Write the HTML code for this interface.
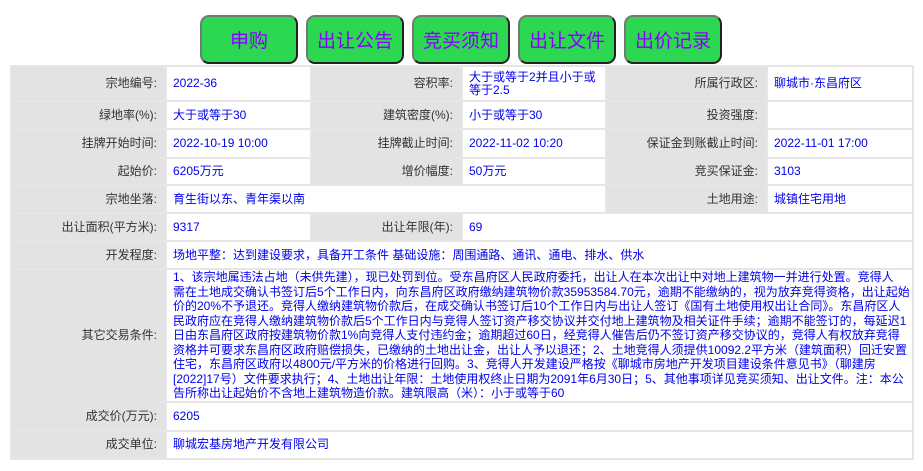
<!DOCTYPE html>
<html><head><meta charset="utf-8"><style>
body{margin:0;background:#fff;font-family:"Liberation Sans","Noto Sans CJK SC",sans-serif;font-size:12px;}
.btns{position:absolute;top:15px;left:0;}
.b{position:absolute;top:0;height:45px;width:94px;background:#2cd852;border:2px solid #555;border-top-color:#777;border-left-color:#777;border-bottom-color:#222;border-right-color:#222;border-radius:9px;color:#8a00ff;font-size:19px;text-align:center;line-height:45px;font-family:"Noto Sans CJK SC",sans-serif;}
table{position:absolute;top:65px;left:10px;border-collapse:collapse;table-layout:fixed;width:902px;}
td{border:2px solid #e6e6e6;padding:0 6px;vertical-align:middle;line-height:13px;}
td.l{background:#e3e3e3;text-align:right;color:#333;padding-right:8px;}
td.v{background:#fff;color:#0000ee;}
.long{white-space:nowrap;line-height:14.5px;font-size:12px;}
</style></head><body>
<div class="btns">
<div class="b" style="left:200px">申购</div>
<div class="b" style="left:306px">出让公告</div>
<div class="b" style="left:412px">竞买须知</div>
<div class="b" style="left:518px">出让文件</div>
<div class="b" style="left:624px">出价记录</div>
</div>
<table>
<colgroup><col style="width:155px"><col style="width:145px"><col style="width:151px"><col style="width:144px"><col style="width:161px"><col style="width:146px"></colgroup>
<tr style="height:35px"><td class="l">宗地编号:</td><td class="v">2022-36</td><td class="l">容积率:</td><td class="v">大于或等于2并且小于或等于2.5</td><td class="l">所属行政区:</td><td class="v">聊城市·东昌府区</td></tr>
<tr style="height:28px"><td class="l">绿地率(%):</td><td class="v">大于或等于30</td><td class="l">建筑密度(%):</td><td class="v">小于或等于30</td><td class="l">投资强度:</td><td class="v"></td></tr>
<tr style="height:29px"><td class="l">挂牌开始时间:</td><td class="v">2022-10-19 10:00</td><td class="l">挂牌截止时间:</td><td class="v">2022-11-02 10:20</td><td class="l">保证金到账截止时间:</td><td class="v">2022-11-01 17:00</td></tr>
<tr style="height:27px"><td class="l">起始价:</td><td class="v">6205万元</td><td class="l">增价幅度:</td><td class="v">50万元</td><td class="l">竞买保证金:</td><td class="v">3103</td></tr>
<tr style="height:28px"><td class="l">宗地坐落:</td><td class="v" colspan="3">育生街以东、青年渠以南</td><td class="l">土地用途:</td><td class="v">城镇住宅用地</td></tr>
<tr style="height:28px"><td class="l">出让面积(平方米):</td><td class="v">9317</td><td class="l">出让年限(年):</td><td class="v" colspan="3">69</td></tr>
<tr style="height:28px"><td class="l">开发程度:</td><td class="v" colspan="5">场地平整：达到建设要求，具备开工条件 基础设施：周围通路、通讯、通电、排水、供水</td></tr>
<tr style="height:131px"><td class="l">其它交易条件:</td><td class="v long" colspan="5">1、该宗地属违法占地（未供先建），现已处罚到位。受东昌府区人民政府委托，出让人在本次出让中对地上建筑物一并进行处置。竞得人<br>需在土地成交确认书签订后5个工作日内，向东昌府区政府缴纳建筑物价款35953584.70元，逾期不能缴纳的，视为放弃竞得资格，出让起始<br>价的20%不予退还。竞得人缴纳建筑物价款后，在成交确认书签订后10个工作日内与出让人签订《国有土地使用权出让合同》。东昌府区人<br>民政府应在竞得人缴纳建筑物价款后5个工作日内与竞得人签订资产移交协议并交付地上建筑物及相关证件手续；逾期不能签订的，每延迟1<br>日由东昌府区政府按建筑物价款1%向竞得人支付违约金；逾期超过60日，经竞得人催告后仍不签订资产移交协议的，竞得人有权放弃竞得<br>资格并可要求东昌府区政府赔偿损失，已缴纳的土地出让金，出让人予以退还；2、土地竞得人须提供10092.2平方米（建筑面积）回迁安置<br>住宅，东昌府区政府以4800元/平方米的价格进行回购。3、竞得人开发建设严格按《聊城市房地产开发项目建设条件意见书》（聊建房<br>[2022]17号）文件要求执行；4、土地出让年限：土地使用权终止日期为2091年6月30日；5、其他事项详见竞买须知、出让文件。注：本公<br>告所称出让起始价不含地上建筑物造价款。建筑限高（米）：小于或等于60</td></tr>
<tr style="height:29px"><td class="l">成交价(万元):</td><td class="v" colspan="5">6205</td></tr>
<tr style="height:28px"><td class="l">成交单位:</td><td class="v" colspan="5">聊城宏基房地产开发有限公司</td></tr>
</table>
</body></html>
